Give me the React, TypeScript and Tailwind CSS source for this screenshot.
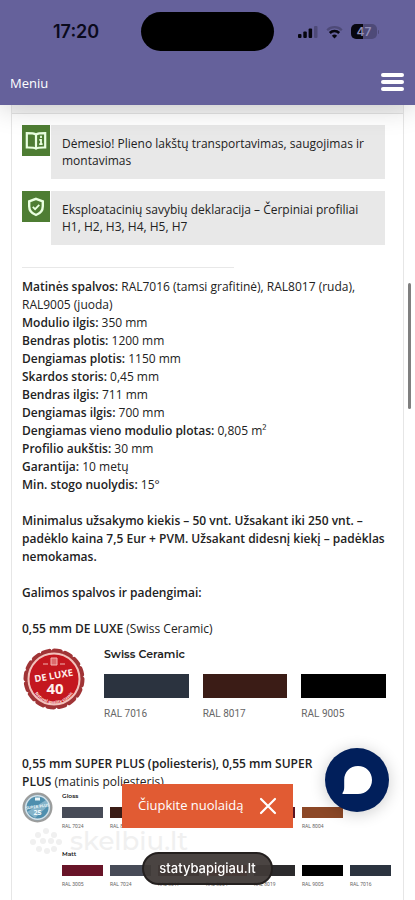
const specs = [
  { label: "Matinės spalvos:", value: "RAL7016 (tamsi grafitinė), RAL8017 (ruda), RAL9005 (juoda)" },
  { label: "Modulio ilgis:", value: "350 mm" },
  { label: "Bendras plotis:", value: "1200 mm" },
  { label: "Dengiamas plotis:", value: "1150 mm" },
  { label: "Skardos storis:", value: "0,45 mm" },
  { label: "Bendras ilgis:", value: "711 mm" },
  { label: "Dengiamas ilgis:", value: "700 mm" },
  { label: "Dengiamas vieno modulio plotas:", value: "0,805 m²" },
  { label: "Profilio aukštis:", value: "30 mm" },
  { label: "Garantija:", value: "10 metų" },
  { label: "Min. stogo nuolydis:", value: "15°" },
];

const ceramic = [
  { name: "RAL 7016", color: "bg-[#2b333f]" },
  { name: "RAL 8017", color: "bg-[#3b1c16]" },
  { name: "RAL 9005", color: "bg-black" },
];

const gloss = [
  { name: "RAL 7024", color: "bg-[#474b57]" },
  { name: "RAL 8017", color: "bg-[#3b1c16]" },
  { name: "RAL 3009", color: "bg-[#6b2c22]" },
  { name: "RAL 3005", color: "bg-[#5b1522]" },
  { name: "RAL 9005", color: "bg-[#5b1522]" },
  { name: "RAL 8004", color: "bg-[#8c4827]" },
];

const matt = [
  { name: "RAL 3005", color: "bg-[#681428]" },
  { name: "RAL 7024", color: "bg-[#474b57]" },
  { name: "RAL 8017", color: "bg-[#3b1c16]" },
  { name: "RAL 8004", color: "bg-[#a8361f]" },
  { name: "RAL 8019", color: "bg-[#2b2a2c]" },
  { name: "RAL 9005", color: "bg-black" },
  { name: "RAL 7016", color: "bg-[#2b333f]" },
];

function StatusBar() {
  return (
    <div className="flex items-center justify-between pt-3 pl-[53px] pr-9">
      <p className="w-[88px] font-['Inter',sans-serif] text-[18px] leading-6 font-semibold text-[#0b0a1c]">
        17:20
      </p>
      <div className="h-[39px] w-[133px] shrink-0 rounded-full bg-black"></div>
      <div className="flex w-[105px] items-center justify-end gap-2">
        <svg className="h-3.5 w-5" viewBox="0 0 20 14" aria-hidden="true">
          <rect x="0" y="9" width="3.5" height="4" rx="1" fill="#07060f" />
          <rect x="5.3" y="6.5" width="3.5" height="6.5" rx="1" fill="#07060f" />
          <rect x="10.6" y="3.5" width="3.5" height="9.5" rx="1" fill="#07060f" />
          <rect x="16" y="1" width="3.5" height="12" rx="1" fill="#4e4a78" />
        </svg>
        <svg className="h-3.5 w-[17px]" viewBox="0 0 17 14" fill="none" aria-hidden="true">
          <path d="M1.2 5.2a10.4 10.4 0 0 1 14.6 0" stroke="#4e4a78" strokeWidth="2.2" />
          <path d="M3.8 8a6.7 6.7 0 0 1 9.4 0" stroke="#07060f" strokeWidth="2.6" />
          <path d="M5.9 10.8a3.8 3.8 0 0 1 5.2 0L8.5 13.4z" fill="#07060f" />
        </svg>
        <div className="flex items-center">
          <div className="flex h-[15px] w-[26px] items-center justify-center rounded-[5px] bg-linear-to-r from-[#07060f] from-48% to-[#4e4a78] to-48% font-['Inter',sans-serif] text-xs leading-none font-semibold text-[#928fb8]">
            47
          </div>
          <div className="ml-px h-1 w-px rounded-r bg-[#4e4a78]"></div>
        </div>
      </div>
    </div>
  );
}

function Header() {
  return (
    <header className="sticky top-0 z-40 bg-[#65619b] shadow-[0_0_28px_rgba(0,0,0,0.22)]">
      <StatusBar />
      <div className="flex h-[54px] items-center justify-between pt-2 pr-[11px] pl-2.5 text-white">
        <span className="pt-0.5 text-[13px] leading-5">Meniu</span>
        <button type="button" aria-label="Meniu" className="flex w-[23px] flex-col gap-[3px]">
          <span className="h-1 rounded-full bg-white"></span>
          <span className="h-1 rounded-full bg-white"></span>
          <span className="h-1 rounded-full bg-white"></span>
        </button>
      </div>
    </header>
  );
}

function BookIcon() {
  return (
    <svg className="h-5 w-[22px]" viewBox="0 0 22 20" fill="none" stroke="#e9ffe0" aria-hidden="true">
      <path d="M11 3.5C9 2.2 4.5 2.2 1.8 2.2v14.3c3 0 7.2-.2 9.2 1.2 2-1.4 6.2-1.2 9.2-1.2V2.2C17.5 2.2 13 2.2 11 3.5z" strokeWidth="2.2" />
      <path d="M11 3v14.5" strokeWidth="2.2" />
      <path d="M16 4.8v2.2M14.3 8.8H16v4.4M14.2 13.2h3.4" strokeWidth="1.8" />
    </svg>
  );
}

function ShieldIcon() {
  return (
    <svg className="h-5 w-[22px]" viewBox="0 0 22 20" fill="none" stroke="#e9ffe0" aria-hidden="true">
      <path d="M11 1.8l6.8 2.6v4.8c0 4.2-2.8 7.3-6.8 8.8-4-1.5-6.8-4.6-6.8-8.8V4.4z" strokeWidth="2.4" />
      <path d="M7.8 9.8l2.3 2.3 4.2-4.3" strokeWidth="1.8" />
    </svg>
  );
}

function DocLink({ icon, children }: { icon: React.ReactNode; children: React.ReactNode }) {
  return (
    <a href="#" className="flex items-start gap-px">
      <span className="flex h-[31px] w-7 shrink-0 items-center justify-center bg-[#4e7d33]">{icon}</span>
      <span className="flex-1 bg-[#e8e8e8] py-2.5 pr-4 pl-[11px] leading-[17px]">{children}</span>
    </a>
  );
}

function DeluxeBadge() {
  return (
    <svg className="h-[62px] w-[62px] shrink-0" viewBox="0 0 62 62" role="img" aria-label="De Luxe 40">
      <defs>
        <linearGradient id="rim" x1="0" y1="0" x2="1" y2="1">
          <stop offset="0" stopColor="#8d2a2c" />
          <stop offset="0.3" stopColor="#c9595a" />
          <stop offset="0.6" stopColor="#9b1d22" />
          <stop offset="1" stopColor="#c45a58" />
        </linearGradient>
        <path id="arc" d="M8.5 33a22.5 22.5 0 0 0 45 0" />
      </defs>
      <circle cx="31" cy="31" r="29" fill="url(#rim)" />
      <circle cx="31" cy="31" r="28" fill="none" stroke="#a03436" strokeWidth="5" strokeDasharray="6 5" strokeLinecap="round" />
      <circle cx="31" cy="31" r="25.5" fill="#c4171f" stroke="#f2c3bd" strokeWidth="2" />
      <path d="M28 10h6v7h-6zM20 16h5M37 16h5" stroke="#f3b5b2" strokeWidth="1" fill="#db6a6c" />
      <g fill="#fff0ee" fontFamily="Open Sans, sans-serif" fontWeight="700" textAnchor="middle">
        <text x="31" y="31" fontSize="9.5" transform="rotate(-10 31 30)">DE LUXE</text>
        <text x="32" y="46" fontSize="15">40</text>
        <text fontSize="4">
          <textPath href="#arc" startOffset="50%">Natural quality classic</textPath>
        </text>
      </g>
    </svg>
  );
}

function SilverBadge() {
  return (
    <svg className="h-[31px] w-[31px] shrink-0" viewBox="0 0 31 31" role="img" aria-label="Super Plus 25">
      <circle cx="15.5" cy="15.5" r="14" fill="#8aa3b2" stroke="#9c9d9c" strokeWidth="2" />
      <circle cx="15.5" cy="15.5" r="11.8" fill="#4f8fae" stroke="#d5e2e8" strokeWidth="1.5" />
      <path d="M5 20L24 8l3 5-14 13z" fill="#a9cbdb" opacity="0.6" />
      <path d="M13 7h5" stroke="#e8f4f8" strokeWidth="3" />
      <g fill="#eef8fb" fontFamily="Open Sans, sans-serif" fontWeight="700" textAnchor="middle">
        <text x="15.5" y="16" fontSize="4" transform="rotate(-8 15 15)">SUPER PLUS</text>
        <text x="15.5" y="23" fontSize="7">25</text>
      </g>
    </svg>
  );
}

function SmallSwatches({ title, items }: { title: string; items: { name: string; color: string }[] }) {
  return (
    <div>
      <p className="font-['Montserrat','Open_Sans',sans-serif] text-[6px] leading-2 font-semibold">{title}</p>
      <ul className="mt-[7px] grid grid-cols-7 gap-[7px]">
        {items.map((item) => (
          <li key={item.name}>
            <div className={`h-[11px] ${item.color}`}></div>
            <p className="mt-1 font-['Roboto',sans-serif] text-[5px] leading-2 text-[#666]">{item.name}</p>
          </li>
        ))}
      </ul>
    </div>
  );
}

function Watermark() {
  return (
    <div className="pointer-events-none absolute top-[34px] left-2 flex items-center gap-2 text-[#f0f0f0]">
      <svg className="h-7 w-8" viewBox="0 0 32 28" fill="currentColor" aria-hidden="true">
        <circle cx="16" cy="4" r="3" />
        <circle cx="8" cy="8" r="3" />
        <circle cx="24" cy="8" r="3" />
        <circle cx="3" cy="15" r="3" />
        <circle cx="13" cy="14" r="3" />
        <circle cx="21" cy="14" r="3" />
        <circle cx="29" cy="15" r="3" />
        <circle cx="9" cy="22" r="3" />
        <circle cx="17" cy="24" r="3" />
        <circle cx="24" cy="22" r="3" />
      </svg>
      <span className="font-['Montserrat','Inter',sans-serif] text-[26px] leading-8 font-medium">skelbiu.lt</span>
    </div>
  );
}

function App() {
  return (
    <div className="flex min-h-screen flex-col bg-white font-['Open_Sans','Noto_Sans',sans-serif] text-xs text-[#222]">
      <Header />
      <main className="mx-[11px] flex-1 border-x border-[#e6e6e6]">
        <div className="h-[9px] border-b border-[#e2e2e2] bg-[#f4f4f4]"></div>
        <div className="px-2.5 pt-[11px]">
          <div className="flex flex-col gap-3 pr-2">
            <DocLink icon={<BookIcon />}>
              Dėmesio! Plieno lakštų transportavimas, saugojimas ir montavimas
            </DocLink>
            <DocLink icon={<ShieldIcon />}>
              Eksploatacinių savybių deklaracija – Čerpiniai profiliai H1, H2, H3, H4, H5, H7
            </DocLink>
          </div>
          <hr className="mt-[22px] w-[212px] border-[#e8e8e8]" />

          <ul className="mt-2.5 leading-[18px]">
            {specs.map((spec) => (
              <li key={spec.label}>
                <strong className="font-semibold">{spec.label}</strong> {spec.value}
              </li>
            ))}
          </ul>
          <p className="mt-[18px] leading-[18px] font-semibold">
            Minimalus užsakymo kiekis – 50 vnt. Užsakant iki 250 vnt. – padėklo kaina 7,5 Eur + PVM.
            Užsakant didesnį kiekį – padėklas nemokamas.
          </p>
          <p className="mt-[18px] leading-[18px] font-semibold">Galimos spalvos ir padengimai:</p>
          <p className="mt-[18px] leading-[18px]">
            <strong className="font-semibold">0,55 mm DE LUXE</strong> (Swiss Ceramic)
          </p>

          <div className="mt-2 flex items-start gap-[19px] pr-[7px]">
            <div className="pt-0.5 pl-px">
              <DeluxeBadge />
            </div>
            <div className="flex-1">
              <p className="font-['Montserrat','Open_Sans',sans-serif] text-[11px] leading-4 font-semibold">
                Swiss Ceramic
              </p>
              <ul className="mt-3 grid grid-cols-3 gap-3.5">
                {ceramic.map((item) => (
                  <li key={item.name}>
                    <div className={`h-6 ${item.color}`}></div>
                    <p className="mt-2 font-['Roboto',sans-serif] text-[10px] leading-4 text-[#666]">{item.name}</p>
                  </li>
                ))}
              </ul>
            </div>
          </div>

          <p className="mt-[33px] pr-16 leading-[18px]">
            <strong className="font-semibold">0,55 mm SUPER PLUS (poliesteris), 0,55 mm SUPER PLUS</strong>{" "}
            (matinis poliesteris)
          </p>
          <div className="relative flex items-start gap-[9px] pt-px pr-0.5">
            <Watermark />
            <SilverBadge />
            <div className="relative flex flex-1 flex-col gap-5">
              <SmallSwatches title="Gloss" items={gloss} />
              <SmallSwatches title="Matt" items={matt} />
            </div>
          </div>
        </div>
      </main>

      <div className="fixed top-[283px] right-1 z-50 h-[126px] w-[3px] rounded-full bg-[#7f7f7f]"></div>

      <div className="fixed bottom-[72px] left-[122px] z-20 flex h-11 w-[171px] items-center justify-between bg-[#e15b33] px-4 text-white">
        <a href="#" className="text-[13px]">Čiupkite nuolaidą</a>
        <button type="button" aria-label="Uždaryti">
          <svg className="h-[18px] w-[18px]" viewBox="0 0 18 18" stroke="currentColor" strokeWidth="2.2" strokeLinecap="round">
            <path d="M2 2l14 14M16 2L2 16" />
          </svg>
        </button>
      </div>

      <button
        type="button"
        aria-label="Pokalbis"
        className="fixed right-[26px] bottom-[88px] z-20 flex h-16 w-16 items-center justify-center rounded-full bg-[#011f5b] shadow-[0_2px_16px_rgba(0,0,0,0.2)]"
      >
        <svg className="h-8 w-8" viewBox="0 0 32 32" fill="#fff" aria-hidden="true">
          <path d="M17 2c8 0 14 6 14 14s-6 14-14 14H2.5c-1.2 0-1.4-.8-.7-1.6C3.2 26.5 3.2 25 3.2 22V16C3.2 8 9 2 17 2z" />
        </svg>
      </button>

      <div className="fixed bottom-[15px] left-[142px] z-30 flex h-[33px] w-[131px] items-center justify-center rounded-full border-2 border-[#24201f] bg-[#403a38]/95 font-['Inter',sans-serif] text-[13px] font-medium text-white">
        statybapigiau.lt
      </div>
    </div>
  );
}

export default App;
